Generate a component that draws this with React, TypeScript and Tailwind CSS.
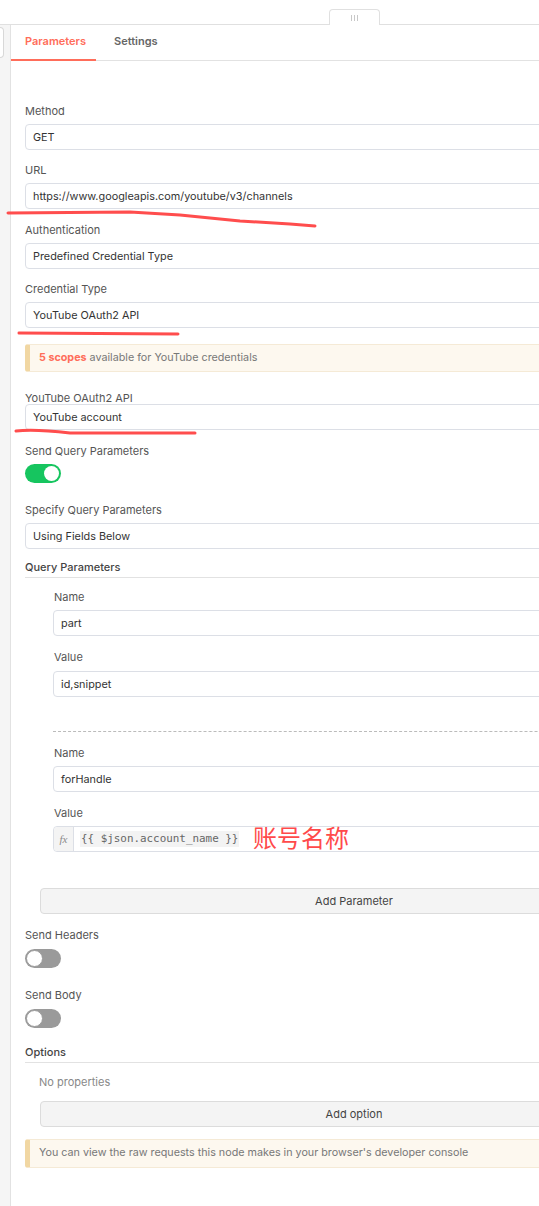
import React from "react";

const Label = ({ children, className = "" }: { children: React.ReactNode; className?: string }) => (
  <div className={"text-[11px] leading-4 text-[#555555] " + className}>{children}</div>
);

const Input = ({ children, className = "" }: { children: React.ReactNode; className?: string }) => (
  <div
    className={
      "h-[26px] flex items-center rounded-[4px] border border-[#dcdfe6] bg-white pl-[7px] text-[10.85px] text-[#333333] " +
      className
    }
  >
    {children}
  </div>
);

const Toggle = ({ on }: { on: boolean }) =>
  on ? (
    <div className="w-[36px] h-[19px] rounded-full bg-[#16c55f] relative">
      <div className="absolute right-[2px] top-[2px] w-[15px] h-[15px] rounded-full bg-white" />
    </div>
  ) : (
    <div className="w-[36px] h-[19px] rounded-full bg-[#9a9a9a] relative">
      <div className="absolute left-[1px] top-[1px] w-[17px] h-[17px] rounded-full bg-white border border-[#9a9a9a]" />
    </div>
  );

export default function App() {
  return (
    <div
      className="relative w-[539px] h-[1206px] overflow-hidden bg-white"
      style={{ fontFamily: "Inter, 'Noto Sans', 'Noto Sans CJK SC', sans-serif" }}
    >
      {/* top strip */}
      <div className="relative h-[25px] border-b border-[#e0e0e0]">
        <div className="absolute left-[329px] top-[9px] w-[51px] h-[16px] bg-white border border-b-0 border-[#e0e0e0] rounded-t-[4px] flex items-center justify-center gap-[2px] pt-[1px]">
          <div className="w-[1px] h-[6px] bg-[#c8c8c8]" />
          <div className="w-[1px] h-[6px] bg-[#c8c8c8]" />
          <div className="w-[1px] h-[6px] bg-[#c8c8c8]" />
        </div>
      </div>

      <div className="flex">
        {/* left strip */}
        <div className="w-[11px] shrink-0 h-[1181px] bg-[#f5f5f5] border-r border-[#e2e2e2]">
          <div className="mt-[2px] w-[4px] h-[31px] bg-white border border-l-0 border-[#d8d8d8] rounded-r-[4px]" />
        </div>

        {/* main panel */}
        <div className="w-[686px] shrink-0">
          {/* tabs */}
          <div className="h-[36px] border-b border-[#e2e2e2] flex items-stretch text-[11px] font-semibold">
            <div className="w-[85px] pl-[14px] pb-[2px] flex items-center text-[#ff6d5a] border-b-2 border-[#ff6d5a] -mb-[1px]">
              Parameters
            </div>
            <div className="pl-[18px] pb-[2px] flex items-center text-[#666666]">Settings</div>
          </div>

          <div className="pl-[14px] pr-[14px] pt-[42px]">
            <Label className="mb-[5px]">Method</Label>
            <Input>GET</Input>

            <Label className="mt-[12px] mb-[5px]">URL</Label>
            <Input>https://www.googleapis.com/youtube/v3/channels</Input>

            <Label className="mt-[13px] mb-[5px]">Authentication</Label>
            <Input>Predefined Credential Type</Input>

            <Label className="mt-[12px] mb-[5px]">Credential Type</Label>
            <Input>YouTube OAuth2 API</Input>

            <div className="mt-[16px] h-[28px] flex items-center bg-[#fdf8ef] border border-[#f5ead6] border-l-[5px] border-l-[#f1d7a3] rounded-[3px] pl-[9px] text-[10.75px] text-[#777777]">
              <span className="font-bold text-[#ff6d5a]">5 scopes</span>
              <span>&nbsp;available for YouTube credentials</span>
            </div>

            <Label className="mt-[18px] -mb-[2px]">YouTube OAuth2 API</Label>
            <Input>YouTube account</Input>

            <Label className="mt-[13px] mb-[5px]">Send Query Parameters</Label>
            <Toggle on />

            <Label className="mt-[19px] mb-[5px]">Specify Query Parameters</Label>
            <Input>Using Fields Below</Input>

            <div className="mt-[10px] pb-[2px] border-b border-[#e2e2e2] text-[11px] leading-4 font-medium text-[#444444]">
              Query Parameters
            </div>

            <div className="pl-[28px]">
              <Label className="mt-[11px] mb-[5px] pl-[1px]">Name</Label>
              <Input>part</Input>
              <Label className="mt-[13px] mb-[6px] pl-[1px]">Value</Label>
              <Input>id,snippet</Input>

              <div className="mt-[34px] border-t border-dashed border-[#bbbbbb]" />

              <Label className="mt-[13px] mb-[5px] pl-[1px]">Name</Label>
              <Input>forHandle</Input>
              <Label className="mt-[13px] mb-[5px] pl-[1px]">Value</Label>
              <div className="relative h-[26px] flex rounded-[4px] border border-[#dcdfe6] bg-white">
                <div
                  className="w-[20px] shrink-0 bg-[#f4f4f4] border-r border-[#dcdfe6] rounded-l-[4px] flex items-center justify-center text-[11px] italic text-[#8a8a8a]"
                  style={{ fontFamily: "'Liberation Serif', serif" }}
                >
                  fx
                </div>
                <div className="flex items-center pl-[6px]">
                  <span
                    className="bg-[#f3f3f3] text-[10.9px] text-[#666666] px-[1px]"
                    style={{ fontFamily: "'DejaVu Sans Mono', 'Liberation Mono', monospace" }}
                  >
                    {"{{ $json.account_name }}"}
                  </span>
                </div>
                <div
                  className="absolute left-[199px] top-[-5px] text-[24px] leading-[30px] text-[#ff4a4a]"
                  style={{ fontFamily: "'Noto Sans CJK SC', sans-serif" }}
                >
                  账号名称
                </div>
              </div>
            </div>

            <div className="mx-[15px] mt-[36px] h-[26px] flex items-center justify-center rounded-[4px] border border-[#dcdcdc] bg-[#f4f4f4] text-[11px] text-[#444444]">
              Add Parameter
            </div>

            <Label className="mt-[13px] mb-[6px]">Send Headers</Label>
            <Toggle on={false} />

            <Label className="mt-[19px] mb-[6px]">Send Body</Label>
            <Toggle on={false} />

            <div className="mt-[16px] pb-[2px] border-b border-[#e2e2e2] text-[11px] leading-4 font-medium text-[#444444]">
              Options
            </div>

            <div className="mt-[11px] pl-[14px] text-[11px] leading-4 text-[#888888]">No properties</div>

            <div className="mx-[15px] mt-[11px] h-[26px] flex items-center justify-center rounded-[4px] border border-[#dcdcdc] bg-[#f4f4f4] text-[11px] text-[#444444]">
              Add option
            </div>

            <div className="mt-[12px] h-[29px] flex items-center bg-[#fdf8ef] border border-[#f5ead6] border-l-[5px] border-l-[#f1d7a3] rounded-[3px] pl-[9px] text-[10.75px] text-[#777777]">
              You can view the raw requests this node makes in your browser's developer console
            </div>
          </div>
        </div>
      </div>

      {/* red annotation strokes */}
      <svg className="absolute left-0 top-0 pointer-events-none" width="539" height="1206">
        <path d="M8 213 L130 212 L180 215 L240 221 L290 224 L315 226" stroke="#ff4d4d" strokeWidth="3" fill="none" strokeLinecap="round" strokeLinejoin="round" />
        <path d="M19 333 L178 334" stroke="#ff4d4d" strokeWidth="3" fill="none" strokeLinecap="round" />
        <path d="M16 431 C30 429 45 430 70 433 L195 433" stroke="#ff4d4d" strokeWidth="3" fill="none" strokeLinecap="round" />
      </svg>
    </div>
  );
}
